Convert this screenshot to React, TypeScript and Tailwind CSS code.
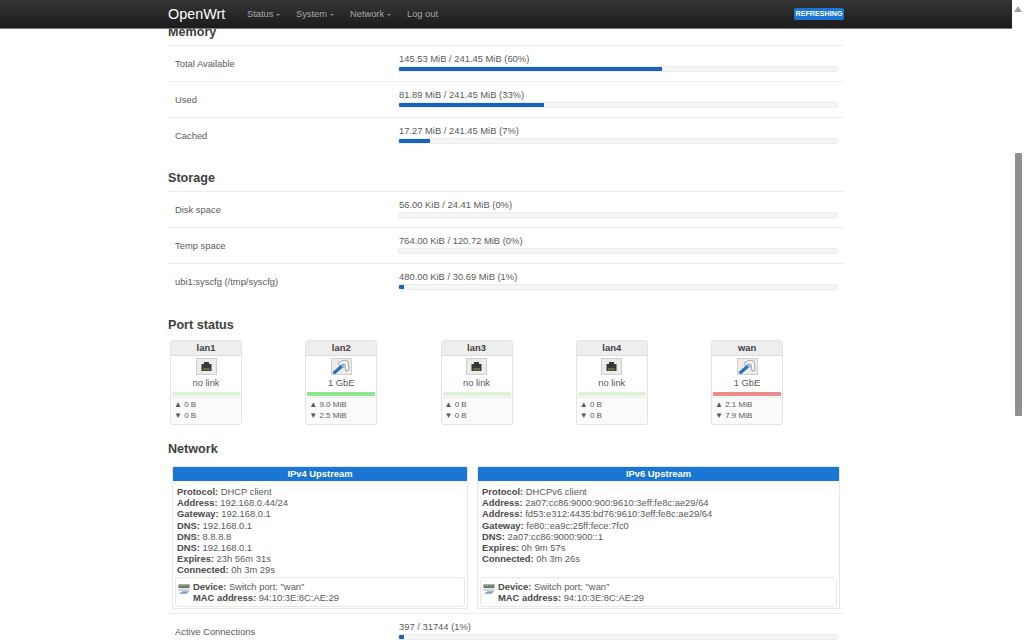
const memory = [
  { label: "Total Available", value: "145.53 MiB / 241.45 MiB (60%)", pct: 60 },
  { label: "Used", value: "81.89 MiB / 241.45 MiB (33%)", pct: 33 },
  { label: "Cached", value: "17.27 MiB / 241.45 MiB (7%)", pct: 7 },
]

const storage = [
  { label: "Disk space", value: "56.00 KiB / 24.41 MiB (0%)", pct: 0 },
  { label: "Temp space", value: "764.00 KiB / 120.72 MiB (0%)", pct: 0 },
  { label: "ubi1:syscfg (/tmp/syscfg)", value: "480.00 KiB / 30.69 MiB (1%)", pct: 1 },
]

const ports = [
  { name: "lan1", speed: "no link", up: "0 B", down: "0 B", on: false, bar: "bg-[#dcf3d8]" },
  { name: "lan2", speed: "1 GbE", up: "9.0 MiB", down: "2.5 MiB", on: true, bar: "bg-[#90e88c]" },
  { name: "lan3", speed: "no link", up: "0 B", down: "0 B", on: false, bar: "bg-[#dcf3d8]" },
  { name: "lan4", speed: "no link", up: "0 B", down: "0 B", on: false, bar: "bg-[#dcf3d8]" },
  { name: "wan", speed: "1 GbE", up: "2.1 MiB", down: "7.9 MiB", on: true, bar: "bg-[#ee8b8b]" },
]

const ipv4 = [
  ["Protocol:", "DHCP client"],
  ["Address:", "192.168.0.44/24"],
  ["Gateway:", "192.168.0.1"],
  ["DNS:", "192.168.0.1"],
  ["DNS:", "8.8.8.8"],
  ["DNS:", "192.168.0.1"],
  ["Expires:", "23h 56m 31s"],
  ["Connected:", "0h 3m 29s"],
]

const ipv6 = [
  ["Protocol:", "DHCPv6 client"],
  ["Address:", "2a07:cc86:9000:900:9610:3eff:fe8c:ae29/64"],
  ["Address:", "fd53:e312:4435:bd76:9610:3eff:fe8c:ae29/64"],
  ["Gateway:", "fe80::ea9c:25ff:fece:7fc0"],
  ["DNS:", "2a07:cc86:9000:900::1"],
  ["Expires:", "0h 9m 57s"],
  ["Connected:", "0h 3m 26s"],
]

function Caret() {
  return <span className="ml-[3px] mt-[1px] h-0 w-0 border-x-[2.5px] border-t-[2.5px] border-x-transparent border-t-[#8a8a8a]" />
}

function Bar({ pct }: { pct: number }) {
  return (
    <div className="h-[6px] w-[440px] overflow-hidden rounded-[2px] border border-[#ececec] bg-[#f6f6f6]">
      {/* small values still show a sliver */}
      <div className="-mt-px h-[6px] rounded-[1px] bg-[#1565c0]" style={{ width: pct === 0 ? 0 : pct === 1 ? 5 : `${pct}%` }} />
    </div>
  )
}

function Row({ label, value, pct }: { label: string; value: string; pct: number }) {
  return (
    <div className="flex h-[36px] items-center border-t border-[#eeeeee]">
      <div className="w-[230px] pl-[7px] pt-[1px] text-[9.4px]">{label}</div>
      <div className="flex flex-col self-start pl-[1px] pt-[7px]">
        <div className="h-[11px] text-[9.4px] leading-[11px]">{value}</div>
        <div className="h-[2px]" />
        <div className="-ml-px">
          <Bar pct={pct} />
        </div>
      </div>
    </div>
  )
}

function Heading({ children, className }: { children: string; className: string }) {
  return <h3 className={`h-[14px] text-[12.6px] font-bold leading-[15px] text-[#404040] ${className}`}>{children}</h3>
}

function PortIcon({ on }: { on: boolean }) {
  return (
    <div className="flex h-[17px] w-[21px] items-center justify-center border border-[#cfcfcf] bg-[#ececec]">
      {on ? (
        <svg width="19" height="15" viewBox="0 0 19 15">
          <path d="M6 4 Q11 0 16 2 L17 11 L14 12 L13 5 Q10 4 8 7 Z" fill="#fbfbfb" stroke="#9a9a9a" strokeWidth="0.9" />
          <path d="M1.5 14.5 L10 7" stroke="#2a6fb5" strokeWidth="3.2" />
          <path d="M8.5 6 L11 5 L13 8 L11 9.5 Z" fill="#8fb4d8" />
        </svg>
      ) : (
        <svg width="13" height="11" viewBox="0 0 13 11">
          <path d="M4 1 H9 V3 H11.5 V10 H1.5 V3 H4 Z" fill="#333b33" />
          <rect x="3" y="7" width="7" height="2.5" fill="#5f6b3c" />
        </svg>
      )}
    </div>
  )
}

function PortCard({ name, speed, up, down, on, bar }: (typeof ports)[number]) {
  return (
    <div className="flex h-[85px] w-[72px] flex-col overflow-hidden rounded-[3px] border border-[#e4e4e4]">
      <div className="h-[15px] border-b border-[#dddddd] bg-[#eeeeee] text-center text-[9.4px] font-bold leading-[14px] text-[#404040]">{name}</div>
      <div className="flex flex-col items-center pt-[2px]">
        <PortIcon on={on} />
        <div className="mt-[1px] text-[9.4px] leading-[13px]">{speed}</div>
      </div>
      <div className={`mx-[1px] mt-[3px] h-[4px] ${bar}`} />
      <div className="mt-[1px] flex-1 border-t border-[#eeeeee] bg-[#fbfbfb] pl-[3px] pt-[1px] text-[8px] leading-[11px]">
        <div>▲ {up}</div>
        <div>▼ {down}</div>
      </div>
    </div>
  )
}

function SwitchIcon() {
  return (
    <svg width="12" height="13" viewBox="0 0 13 13" className="mt-[2px] shrink-0">
      <rect x="0.5" y="1" width="12" height="4" fill="#66735f" />
      <path d="M2 2.5 H3 M4.5 2.5 H5.5 M7 2.5 H8 M9.5 2.5 H10.5" stroke="#f3f3d0" strokeWidth="1" />
      <path d="M0.5 6 H12.5 V8 H0.5 Z" fill="#c9d4e4" />
      <path d="M1 11 L5 8.5 H12 L9 11 Z" fill="#7d9cc6" />
    </svg>
  )
}

function Upstream({ title, lines, width }: { title: string; lines: string[][]; width: string }) {
  return (
    <div className={`flex h-[143px] flex-col overflow-hidden rounded-[2px] border border-[#e6e6e6] ${width}`}>
      <div className="-mx-px h-[14px] bg-[#1976d2] text-center text-[9.4px] font-bold leading-[14px] text-white">{title}</div>
      <div className="flex flex-1 flex-col pl-[4px] pr-[5px] pt-[5px] text-[9.4px] leading-[11.2px]">
        {lines.map((line, i) => (
          <div key={i}>
            <b className="text-[#4a4a4a]">{line[0]}</b> {line[1]}
          </div>
        ))}
        <div className="-ml-[2px] -mr-[3px] mb-[1px] mt-auto flex h-[30px] gap-[3px] rounded-[3px] border border-[#e8e8e8] px-[2px] pt-[3px]">
          <SwitchIcon />
          <div>
            <div><b className="text-[#4a4a4a]">Device:</b> Switch port: "wan"</div>
            <div><b className="text-[#4a4a4a]">MAC address:</b> 94:10:3E:8C:AE:29</div>
          </div>
        </div>
      </div>
    </div>
  )
}

export default function App() {
  return (
    <div className="flex h-[640px] w-[1024px] overflow-hidden bg-white font-['Liberation_Sans',Arial,sans-serif] text-[#5a5a5a]">
      <div className="flex w-[1012px] flex-col overflow-hidden">
        <header className="relative z-10 h-[29px] shrink-0 border-b border-[#777777] bg-gradient-to-b from-[#353535] to-[#1c1c1c] pl-[168px]">
          <div className="flex h-[28px] w-[676px] items-center">
            <span className="w-[79px] text-[14.4px] leading-[28px] text-white">OpenWrt</span>
            <nav className="flex items-center pt-[1px] text-[9.3px] text-[#a8a8a8]">
              <span className="flex w-[49px] items-center">Status<Caret /></span>
              <span className="flex w-[54px] items-center">System<Caret /></span>
              <span className="flex w-[57px] items-center">Network<Caret /></span>
              <span>Log out</span>
            </nav>
            <span className="ml-auto flex h-[12px] w-[50px] items-center justify-center rounded-[2px] bg-[#1976d2] text-[7.2px] font-bold text-white">REFRESHING</span>
          </div>
        </header>

        <main className="ml-[168px] w-[676px]">
          <Heading className="-mt-[4px] mb-[6px]">Memory</Heading>
          {memory.map((r) => <Row key={r.label} {...r} />)}

          <Heading className="mb-[6px] mt-[18px]">Storage</Heading>
          {storage.map((r) => <Row key={r.label} {...r} />)}

          <Heading className="mb-[8px] mt-[19px]">Port status</Heading>
          <div className="flex gap-[63.25px] pl-[2px]">
            {ports.map((p) => <PortCard key={p.name} {...p} />)}
          </div>

          <Heading className="mb-[10px] mt-[17px]">Network</Heading>
          <div className="flex gap-[9px] pl-[4px]">
            <Upstream title="IPv4 Upstream" lines={ipv4} width="w-[296px]" />
            <Upstream title="IPv6 Upstream" lines={ipv6} width="w-[363px]" />
          </div>

          <div className="mt-[4px]">
            <Row label="Active Connections" value="397 / 31744 (1%)" pct={1} />
          </div>
        </main>
      </div>

      {/* scrollbar */}
      <div className="flex w-[12px] flex-col items-center bg-white pt-[6px]">
        <svg width="8" height="6" viewBox="0 0 8 6" className="shrink-0">
          <path d="M4 0 L8 6 H0 Z" fill="#a0a0a0" />
        </svg>
        <div className="mt-[141px] h-[263px] w-[7px] rounded-[1px] bg-[#8f8f8f]" />
      </div>
    </div>
  )
}
